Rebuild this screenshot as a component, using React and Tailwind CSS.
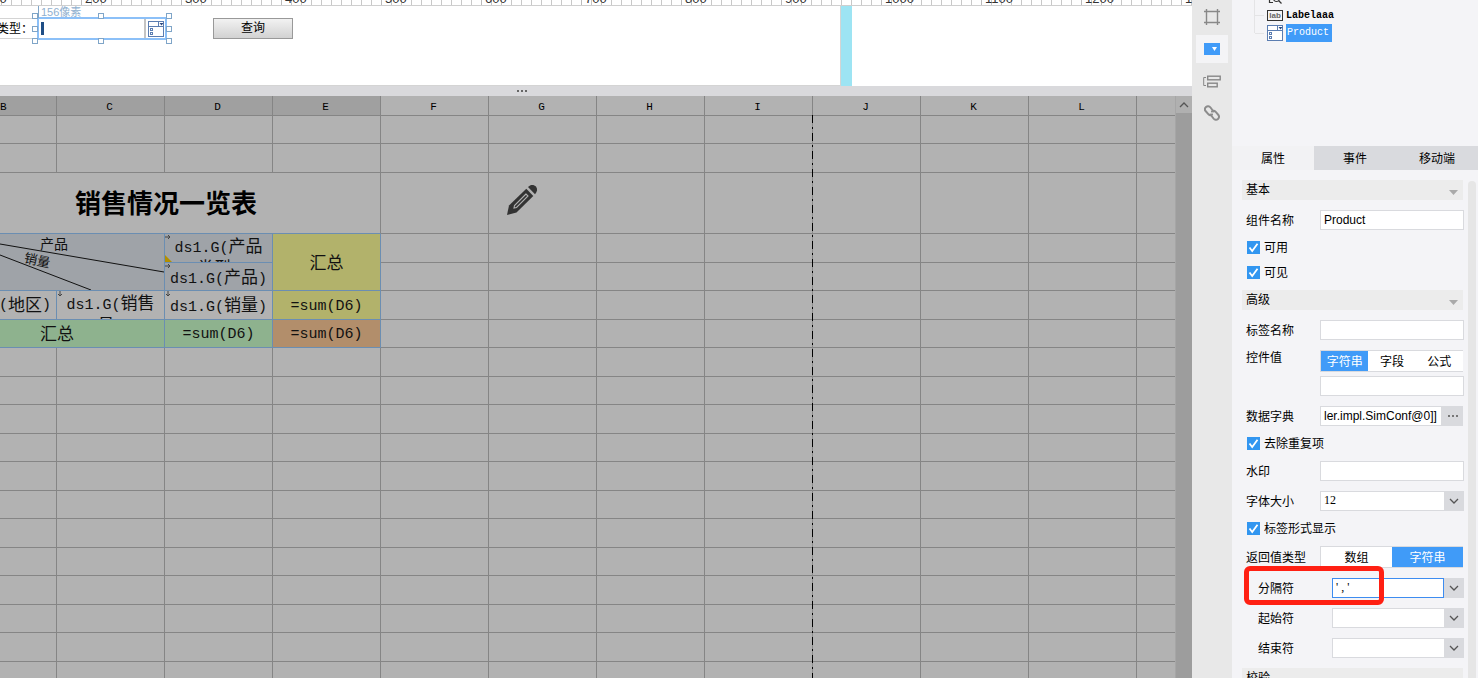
import { useState } from 'react'

const rulerMarks = [100, 200, 300, 400, 500, 600, 700, 800, 900, 1000, 1100, 1200, 1300]
const columns = ['B', 'C', 'D', 'E', 'F', 'G', 'H', 'I', 'J', 'K', 'L', '']
const freeColumns = columns.slice(4)

function ComboIcon() {
  return (
    <svg width="16" height="16" viewBox="0 0 16 16" fill="none" stroke="#5b7db1" className="shrink-0">
      <rect x="0.5" y="0.5" width="15" height="15" fill="#fff" />
      <path d="M0 5.5h16M10.5 0v5.5" />
      <path d="M11.5 2h4l-2 2.5z" fill="#2d4a80" stroke="none" />
      <rect x="2.5" y="7.5" width="2" height="2" />
      <rect x="2.5" y="11.5" width="2" height="2" />
    </svg>
  )
}

function Chevron() {
  return (
    <svg width="10" height="6" viewBox="0 0 10 6" fill="none" stroke="#555" strokeWidth="1.3">
      <path d="M1 1l4 4 4-4" />
    </svg>
  )
}

function PencilIcon() {
  return (
    <svg width="32" height="32" viewBox="0 0 32 32" fill="#333">
      <path d="M22 3C24.500 .2 28 .4 30 2.600C31.800 5 31.300 8 29 10.300Z" />
      <path d="M20.300 4.800L27.300 12L10.500 28.500L1 31L3 21.500Z" />
      <path d="M20 10L8.500 21.500L8 24L10.500 23.500L22 12Z" fill="none" stroke="#b2b2b2" strokeWidth="1.1" />
    </svg>
  )
}

function Ruler() {
  return (
    <div className="h-[6px] flex overflow-hidden border-b border-[#cfcfcf] bg-white">
      <div className="-ml-[19px] flex">
        {rulerMarks.map((mark) => (
          <div
            key={mark}
            className="w-[100px] h-[5px] shrink-0 border-l border-[#bbb] bg-[repeating-linear-gradient(90deg,transparent_0_9px,#c8c8c8_9px_10px)]"
          >
            <span className="block -mt-[8px] pl-[3px] text-[13px] leading-[13px] text-[#333]">{mark}</span>
          </div>
        ))}
      </div>
    </div>
  )
}

function Handles() {
  const spots = [
    'left-0 top-0', 'left-[66px] top-0', 'right-0 top-0',
    'left-0 top-[13px]', 'right-0 top-[13px]',
    'left-0 bottom-0', 'left-[66px] bottom-0', 'right-0 bottom-0',
  ]
  return (
    <div className="absolute -inset-x-[7px] -inset-y-[6px] pointer-events-none">
      {spots.map((spot) => (
        <span key={spot} className={`absolute size-[6px] border border-[#7fa5c8] bg-white ${spot}`} />
      ))}
    </div>
  )
}

function FormCanvas() {
  return (
    <div className="flex h-20 bg-white">
      <div className="w-[841px] border-r border-b border-[#d4d4d4]">
        <div className="flex items-start pt-[11px]">
          <label htmlFor="product-box" className="mt-px w-[37px] h-[21px] border-y border-[#d4d4d4] flex items-center whitespace-nowrap text-[12px]">
            <span className="-ml-[3px] pt-px">类型：</span>
          </label>
          <div className="relative w-[130px] h-[23px] border-2 border-[#8cc0f8] bg-white flex items-center">
            <input id="product-box" className="w-[105px] h-full px-1 outline-none text-[12px]" />
            <span className="absolute left-[2px] top-[3px] w-[3px] h-[13px] bg-[#1f4e86]" />
            <button aria-label="选择" className="h-full flex-1 border-l-2 border-[#c4c4c4] flex items-center justify-center">
              <ComboIcon />
            </button>
            <div className="absolute -left-[1px] -top-[13px] h-3 border-l border-[#7fa5c8] pl-[2px] text-[11px] leading-3 text-[#8fb0cf] whitespace-nowrap">
              156像素
            </div>
            <Handles />
          </div>
          <button className="ml-[46px] mt-px w-20 h-[21px] border border-[#999] bg-linear-to-b from-[#f2f2f2] to-[#d2d2d2] text-[12px] leading-[19px]">
            查询
          </button>
        </div>
      </div>
      <div className="w-[11px] bg-[#9de4f3]" />
    </div>
  )
}

const line = 'border-r border-b border-[#858585] p-0 last:border-r-0'
const blueLine = 'border-r border-b border-[#6b8eb2] p-0'

// formula made of latin code with a Chinese field name inside
function Formula({ field, rest }) {
  return (
    <>
      <span className="font-['Liberation_Mono',monospace] text-[15px]">ds1.G(</span>
      {field}
      {rest && <><br />{rest}</>}
      <span className="font-['Liberation_Mono',monospace] text-[15px]">)</span>
    </>
  )
}

function Sum() {
  return <div className="pt-[3px] font-['Liberation_Mono',monospace] text-[15px]">=sum(D6)</div>
}

function Arrow({ down }) {
  return (
    <svg width="6" height="6" viewBox="0 0 6 6" fill="none" stroke="#444" className={`absolute left-0 top-0 ${down ? 'rotate-90' : ''}`}>
      <path d="M0 3h5M3 1l2 2-2 2" />
    </svg>
  )
}

function FreeCells() {
  return freeColumns.map((name, i) => <td key={i} className={line} />)
}

function EmptyRow({ tall }) {
  return (
    <tr className={tall ? 'h-[29px]' : 'h-[28px]'}>
      {columns.map((name, i) => <td key={i} className={line} />)}
    </tr>
  )
}

function Sheet() {
  return (
    <div className="relative flex-1 min-w-0 overflow-hidden">
      <table className="w-full table-fixed border-separate border-spacing-0 text-[17px] leading-[22px] text-[#111]">
        <colgroup>
          <col className="w-[57px]" />
          {columns.slice(1, 11).map((name) => <col key={name} className="w-[108px]" />)}
          <col />
        </colgroup>
        <thead>
          <tr className="h-[20px] font-['Liberation_Mono',monospace] text-[11px] leading-[16px] text-black">
            {columns.map((name, i) => (
              <th
                key={i}
                className={`border-r border-b border-[#858585] last:border-r-0 p-0 pt-[3px] font-normal ${i === 0 ? 'text-left' : 'pr-[2px] text-center'} ${i < 4 ? 'bg-[#a0a0a0]' : ''}`}
              >
                {name}
              </th>
            ))}
          </tr>
        </thead>
        <tbody>
          <EmptyRow />
          <EmptyRow tall />
          <tr className="h-[61px]">
            <td colSpan={4} className="border-b border-r border-b-[#6b8eb2] border-r-[#858585] p-0 pt-[2px] pl-[75px] text-left text-[26px] font-bold text-black">
              销售情况一览表
            </td>
            {freeColumns.map((name, i) => (
              <td key={i} className={line}>
                {name === 'G' && <div className="pl-[17px] pb-1.5"><PencilIcon /></div>}
              </td>
            ))}
          </tr>
          <tr className="h-[29px]">
            <td colSpan={2} rowSpan={2} className={`${blueLine} bg-[#9fa3a8]`}>
              <div className="relative h-[56px] overflow-hidden">
                <svg className="absolute inset-0 size-full" viewBox="0 0 164 56" preserveAspectRatio="none" stroke="#111" fill="none">
                  <path d="M0 10L164 38M0 21L91 56" />
                </svg>
                <span className="absolute left-10 top-0 text-[14px] leading-5">产品</span>
                <span className="absolute left-6 top-[17px] text-[13px] leading-5 rotate-12">销量</span>
              </div>
            </td>
            <td className={`${blueLine} bg-[#9fa3a8]`}>
              <div className="relative h-[28px] overflow-hidden pt-[3px] text-center leading-[20px]">
                <Arrow />
                <svg width="7" height="7" className="absolute left-0 bottom-0"><path d="M0 0L7 7H0z" fill="#b38f00" /></svg>
                <Formula field="产品" rest="类型" />
              </div>
            </td>
            <td rowSpan={2} className={`${blueLine} bg-[#b2b26b] text-center`}><div className="pt-[4px]">汇总</div></td>
            <FreeCells />
          </tr>
          <tr className="h-[28px]">
            <td className={`${blueLine} bg-[#9fa3a8]`}>
              <div className="relative h-[27px] pt-[4px] text-center whitespace-nowrap">
                <Arrow />
                <Formula field="产品" />
              </div>
            </td>
            <FreeCells />
          </tr>
          <tr className="h-[29px]">
            <td className={blueLine}>
              <div className="h-[28px] pt-[4px] pr-[5px] flex justify-end whitespace-nowrap overflow-hidden">
                <span className="font-['Liberation_Mono',monospace] text-[15px]">(</span>
                地区
                <span className="font-['Liberation_Mono',monospace] text-[15px]">)</span>
              </div>
            </td>
            <td className={blueLine}>
              <div className="relative h-[28px] overflow-hidden pt-[3px] text-center leading-[20px]">
                <Arrow down />
                <Formula field="销售" rest="员" />
              </div>
            </td>
            <td className={blueLine}>
              <div className="relative h-[28px] pt-[4px] text-center whitespace-nowrap">
                <Arrow down />
                <Formula field="销量" />
              </div>
            </td>
            <td className={`${blueLine} bg-[#b2b26b] text-center`}><Sum /></td>
            <FreeCells />
          </tr>
          <tr className="h-[28px]">
            <td colSpan={2} className={`${blueLine} bg-[#8eb28e]`}><div className="pl-10 pt-[3px]">汇总</div></td>
            <td className={`${blueLine} bg-[#8eb28e] text-center`}><Sum /></td>
            <td className={`${blueLine} bg-[#b28e6b] text-center`}><Sum /></td>
            <FreeCells />
          </tr>
          {Array.from({ length: 14 }, (_, i) => <EmptyRow key={i} tall={i % 2 === 0} />)}
        </tbody>
      </table>
      {/* page break */}
      <div className="absolute left-[812px] top-[19px] bottom-0 w-px bg-[repeating-linear-gradient(180deg,#000_0_8px,#8c8c8c_8px_12px,#000_12px_14px,#8c8c8c_14px_18px)]" />
    </div>
  )
}

function Toolbar() {
  return (
    <nav className="w-10 shrink-0 bg-[#e8e8e8] flex flex-col items-center gap-1 pt-[3px]">
      <button aria-label="画布" className="w-8 h-7 flex items-center justify-center">
        <svg width="16" height="16" viewBox="0 0 16 16" fill="none" stroke="#888" strokeWidth="1.4">
          <path d="M0 2.500h16M0 13.500h16M2.500 0v16M13.500 0v16" />
        </svg>
      </button>
      <button aria-label="控件" className="w-8 h-7 bg-[#f4f4f6] flex items-center justify-center">
        <svg width="16" height="12" viewBox="0 0 16 12">
          <path d="M0 0h16v12H0z" fill="#409bf8" />
          <path d="M8 4h5L10.500 8z" fill="#fff" />
        </svg>
      </button>
      <button aria-label="布局" className="w-8 h-7 flex items-center justify-center">
        <svg width="18" height="13" viewBox="0 0 18 13" fill="none" stroke="#888" strokeWidth="1.4">
          <path d="M3 2.500H.7v8H3" strokeWidth="1" />
          <rect x="4.700" y="1.200" width="12.500" height="3.600" />
          <rect x="4.700" y="8.200" width="9.500" height="3.600" />
        </svg>
      </button>
      <button aria-label="超链接" className="w-8 h-7 flex items-center justify-center">
        <svg width="16" height="16" viewBox="0 0 16 16" fill="none" stroke="#8c8c8c" strokeWidth="2" strokeLinecap="round">
          <path d="M9.500 6.500L6.500 2.500C5.300 1 3.300 .8 2 2S.6 5 1.800 6.300L4.500 9.300C5.500 10.300 7 10.300 8 9.400" />
          <path d="M6.500 9.500L9.500 13.500c1.200 1.500 3.200 1.700 4.500.500s1.400-3 .200-4.300L11.500 6.700C10.500 5.700 9 5.700 8 6.600" />
        </svg>
      </button>
    </nav>
  )
}

function WidgetTree() {
  return (
    <div className="h-[146px] shrink-0 overflow-hidden pl-[22px]">
      <ul className="-mt-[12px] border-l border-[#e4e4e6] h-[45px] font-['Liberation_Mono',monospace] text-[10px] font-bold">
        <li className="h-[18px] pl-3 flex items-center gap-[3px]">
          <svg width="16" height="14" viewBox="0 0 16 14" fill="none" stroke="#333" strokeWidth="1.2">
            <path d="M6 12.500H2.500V1H12v3" />
            <circle cx="9.500" cy="8.500" r="3" />
            <path d="M12 11l2.500 2.500" />
          </svg>
          <span>formSubmit0</span>
        </li>
        <li className="h-[18px] flex items-center">
          <span className="w-[9px] mr-[3px] border-t border-[#e4e4e6]" />
          <span className="w-4 h-[11px] border border-[#333] text-[8px] leading-[9px] text-center font-['Liberation_Sans',sans-serif] text-[#666]">lab</span>
          <span className="pl-[3px]">Labelaaa</span>
        </li>
        <li className="h-[18px] flex items-center">
          <span className="w-[9px] mr-[3px] border-t border-[#e4e4e6]" />
          <ComboIcon />
          <span className="ml-[3px] px-px pr-[3px] leading-[18px] bg-[#409bf8] text-white font-normal">Product</span>
        </li>
      </ul>
    </div>
  )
}

function SectionBar({ title }) {
  return (
    <div className="h-[30px] py-[5px] pr-px">
      <button className="w-full h-5 bg-[#ececec] flex items-center justify-between pl-1 pr-[5px]">
        <span>{title}</span>
        <svg width="9" height="5" viewBox="0 0 9 5" className="mt-1"><path d="M0 0h9L4.500 5z" fill="#aaa" /></svg>
      </button>
    </div>
  )
}

function Field({ id, label, indent, children }) {
  return (
    <div className={`relative h-[30px] flex items-center ${indent ? 'pl-4' : 'pl-1'}`}>
      <label htmlFor={id} className="w-[74px] shrink-0 pt-[2px]">{label}</label>
      {children}
    </div>
  )
}

function TextBox({ id, value = '' }) {
  return (
    <input
      id={id}
      defaultValue={value}
      className="w-full min-w-0 h-5 border border-[#d9dade] bg-white px-[3px] text-[12px] font-['Liberation_Sans',sans-serif] outline-none"
    />
  )
}

function DropDown({ id, value = '', active }) {
  return (
    <div className="flex-1 h-5 grid">
      <select
        id={id}
        defaultValue={value}
        className={`col-start-1 row-start-1 appearance-none block h-5 border pl-[3px] bg-white text-[12px] leading-[16px] pb-[2px] font-['Liberation_Serif',serif] outline-none ${active ? 'mr-5 border-[#3d8cf0]' : 'border-[#d9dade]'}`}
      >
        <option value={value}>{value}</option>
      </select>
      <span className="col-start-1 row-start-1 justify-self-end w-5 h-5 bg-[#d9dade] flex items-center justify-center pointer-events-none z-10">
        <Chevron />
      </span>
    </div>
  )
}

function Check({ label }) {
  return (
    <label className="h-[25px] pl-[5px] flex items-center gap-1">
      <span className="relative size-[13px]">
        <input type="checkbox" defaultChecked className="peer appearance-none block size-[13px] border border-[#bbb] bg-white checked:border-[#3296f0] checked:bg-[#3296f0]" />
        <svg viewBox="0 0 13 13" fill="none" stroke="#fff" strokeWidth="1.8" className="absolute inset-0 pointer-events-none invisible peer-checked:visible">
          <path d="M2.500 6.500L5.200 10L10.500 2.800" />
        </svg>
      </span>
      {label}
    </label>
  )
}

function Segmented({ options, initial }) {
  const [active, setActive] = useState(initial)
  return (
    <div className="flex-1 pr-px">
      <div className="h-[22px] flex border border-r-0 border-[#d9dade] bg-white">
        {options.map((option) => (
          <button
            key={option}
            onClick={() => setActive(option)}
            className={`flex-1 pt-px ${option === active ? 'bg-[#409bf8] text-white' : ''}`}
          >
            {option}
          </button>
        ))}
      </div>
    </div>
  )
}

function PropertyPanel() {
  return (
    <aside className="w-[246px] shrink-0 bg-[#f4f4f7] flex flex-col overflow-hidden">
      <WidgetTree />
      <div className="h-6 shrink-0 grid grid-cols-3 bg-[#d9dade]">
        <button className="bg-[#f2f2f4] pt-px">属性</button>
        <button className="pt-px">事件</button>
        <button className="pt-px">移动端</button>
      </div>
      <div className="flex-1 min-h-0 flex">
        <div className="flex-1 min-w-0 ml-[10px] mr-1 pt-[5px] overflow-hidden">
          <SectionBar title="基本" />
          <Field id="name" label="组件名称"><TextBox id="name" value="Product" /></Field>
          <Check label="可用" />
          <Check label="可见" />
          <SectionBar title="高级" />
          <Field id="label-name" label="标签名称"><TextBox id="label-name" /></Field>
          <div className="flex pl-1 py-[5px]">
            <label htmlFor="widget-value" className="w-[74px] shrink-0 leading-4">控件值</label>
            <div className="flex-1 flex flex-col gap-1">
              <Segmented options={['字符串', '字段', '公式']} initial="字符串" />
              <TextBox id="widget-value" />
            </div>
          </div>
          <Field id="dict" label="数据字典">
            <TextBox id="dict" value="ler.impl.SimConf@0]]" />
            <button aria-label="编辑" className="w-[21px] h-5 mr-px shrink-0 bg-[#d9dade] flex items-center justify-center gap-[2px]">
              <i className="size-[2px] bg-[#777]" />
              <i className="size-[2px] bg-[#777]" />
              <i className="size-[2px] bg-[#777]" />
            </button>
          </Field>
          <Check label="去除重复项" />
          <Field id="watermark" label="水印"><TextBox id="watermark" /></Field>
          <Field id="font-size" label="字体大小"><DropDown id="font-size" value="12" /></Field>
          <Check label="标签形式显示" />
          <div className="h-8 pl-1 flex items-center">
            <span className="w-[74px] shrink-0 pt-px">返回值类型</span>
            <Segmented options={['数组', '字符串']} initial="字符串" />
          </div>
          <Field id="separator" label="分隔符" indent>
            <DropDown id="separator" value="' , '" active />
            <div className="absolute left-[2px] -top-[7px] w-[140px] h-[39px] border-5 border-[#ff2013] rounded-md pointer-events-none z-20" />
          </Field>
          <Field id="start" label="起始符" indent><DropDown id="start" /></Field>
          <Field id="end" label="结束符" indent><DropDown id="end" /></Field>
          <SectionBar title="校验" />
        </div>
        <div className="w-2 mr-[2px] mt-[11px] rounded-t bg-[#e6e6e6]" />
      </div>
    </aside>
  )
}

function App() {
  return (
    <div className="h-screen flex overflow-hidden bg-white text-[12px] text-black font-['Liberation_Sans','Noto_Sans_CJK_SC',sans-serif]">
      <main className="flex-1 min-w-0 flex flex-col">
        <Ruler />
        <FormCanvas />
        <div className="h-[10px] shrink-0 bg-[#d9d9dc] flex items-center pl-[517px] gap-[2px]">
          <i className="size-[2px] bg-[#666]" />
          <i className="size-[2px] bg-[#666]" />
          <i className="size-[2px] bg-[#666]" />
        </div>
        <div className="flex-1 min-h-0 flex bg-[#b2b2b2]">
          <Sheet />
          <div className="w-[17px] shrink-0 border-l border-[#a6a6a6] bg-[#9d9d9d]">
            <button aria-label="向上滚动" className="w-full h-[17px] bg-[#b0b0b0] flex items-center justify-center">
              <svg width="10" height="6" viewBox="0 0 10 6" fill="none" stroke="#555" strokeWidth="1.3"><path d="M1 5l4-4 4 4" /></svg>
            </button>
          </div>
        </div>
      </main>
      <Toolbar />
      <PropertyPanel />
    </div>
  )
}

export default App
